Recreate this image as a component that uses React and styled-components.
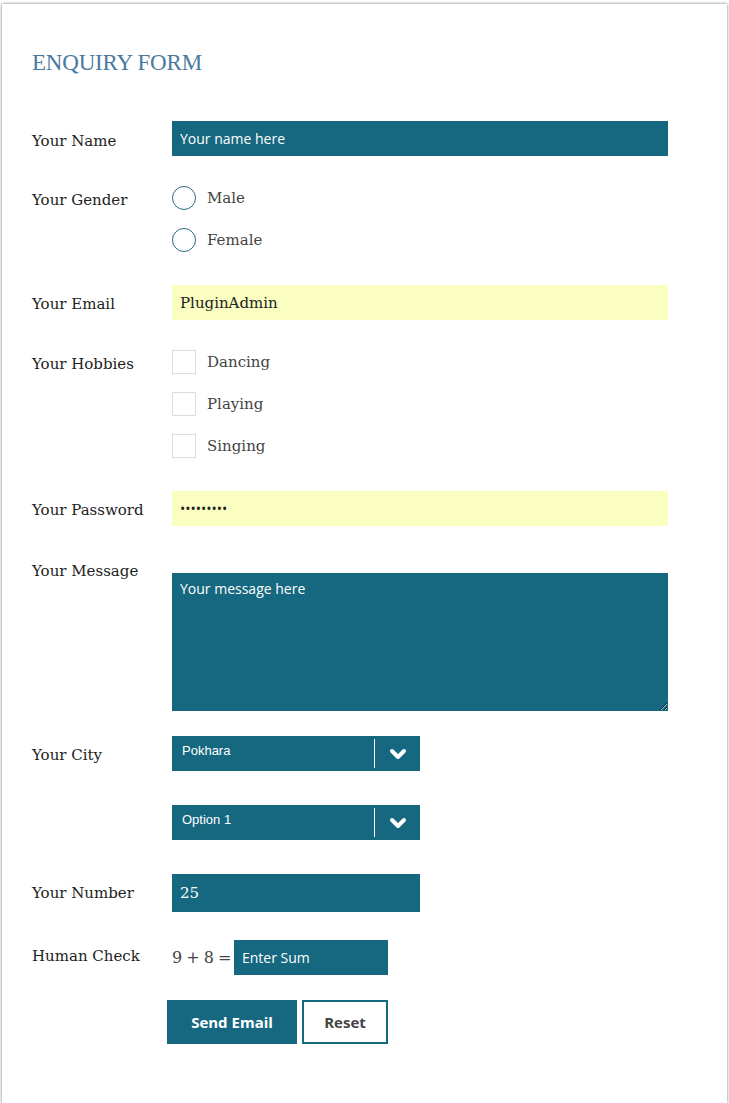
import React from 'react';
import styled, { createGlobalStyle } from 'styled-components';

const teal = '#15687f';

const GlobalStyle = createGlobalStyle`
  html, body {
    margin: 0;
    padding: 0;
    background: #fff;
  }
  * {
    box-sizing: border-box;
  }
`;

const Frame = styled.div`
  margin: 4px 2px 0 2px;
  min-height: 1099px;
  background: #fff;
  box-shadow: 0 0 3px rgba(0, 0, 0, 0.55);
  padding: 46px 30px 40px 30px;
`;

const Title = styled.h2`
  margin: 0 0 45px 0;
  font-family: 'Liberation Serif', serif;
  font-weight: normal;
  font-size: 23px;
  letter-spacing: -0.2px;
  color: #4a79a0;
`;

const Row = styled.div`
  display: flex;
  align-items: flex-start;
  margin-top: ${(p) => p.$top || 0}px;
`;

const Label = styled.label`
  width: 140px;
  flex-shrink: 0;
  padding-top: ${(p) => p.$pad || 0}px;
  font-family: 'DejaVu Serif', serif;
  font-size: 15px;
  line-height: 20px;
  color: #222;
`;

const Field = styled.div`
  display: flex;
  flex-direction: column;
  gap: ${(p) => p.$gap || 0}px;
`;

const TextInput = styled.input`
  width: ${(p) => p.$w || 496}px;
  height: ${(p) => p.$h || 35}px;
  border: none;
  outline: none;
  padding: 0 8px;
  background: ${(p) => (p.$filled ? '#fafec0' : teal)};
  color: ${(p) => (p.$filled ? '#222' : '#fff')};
  font-family: ${(p) => (p.$serif ? "'DejaVu Serif', serif" : "'Open Sans', sans-serif")};
  font-size: ${(p) => (p.$serif ? 15 : 14)}px;
  &::placeholder {
    color: #fff;
    opacity: 1;
  }
`;

const TextArea = styled.textarea`
  display: block;
  margin-top: 12px;
  width: 496px;
  height: 138px;
  border: none;
  outline: none;
  padding: 6px 8px;
  resize: vertical;
  background: ${teal};
  color: #fff;
  font-family: 'Open Sans', sans-serif;
  font-size: 14px;
  &::placeholder {
    color: #fff;
    opacity: 1;
  }
`;

const Choice = styled.label`
  display: flex;
  align-items: center;
  gap: 11px;
  height: 24px;
  font-family: 'DejaVu Serif', serif;
  font-size: 15px;
  color: #444;
`;

const Radio = styled.span`
  width: 24px;
  height: 24px;
  border-radius: 50%;
  border: 1px solid #2c6a84;
  flex-shrink: 0;
`;

const Check = styled.span`
  width: 24px;
  height: 24px;
  border: 1px solid #dcdcdc;
  flex-shrink: 0;
`;

const Select = styled.div`
  display: flex;
  align-items: center;
  width: 248px;
  height: 35px;
  background: ${teal};
  color: #fff;
  font-family: 'Liberation Sans', Arial, sans-serif;
  font-size: 13px;
`;

const SelectText = styled.span`
  flex: 1;
  padding: 0 10px;
  margin-top: -6px;
`;

const Divider = styled.span`
  width: 1px;
  height: 29px;
  background: #fff;
`;

const Arrow = styled.span`
  width: 45px;
  display: flex;
  justify-content: center;
  align-items: center;
`;

const SelectStack = styled.div`
  display: flex;
  flex-direction: column;
  gap: 34px;
`;

const Sum = styled.div`
  display: flex;
  align-items: center;
  gap: 3px;
  font-family: 'DejaVu Serif', serif;
  font-size: 16px;
  letter-spacing: -0.5px;
  color: #444;
`;

const Buttons = styled.div`
  display: flex;
  gap: 5px;
  margin-top: 25px;
  margin-left: 135px;
`;

const Button = styled.button`
  height: 44px;
  width: ${(p) => p.$w}px;
  border: 2px solid ${teal};
  background: ${(p) => (p.$primary ? teal : '#fff')};
  color: ${(p) => (p.$primary ? '#fff' : '#444')};
  font-family: 'Open Sans', sans-serif;
  font-weight: 700;
  font-size: 15px;
  cursor: pointer;
`;

const Chevron = () => (
  <svg width="18" height="12" viewBox="0 0 18 12">
    <polyline
      points="3,3 9,9 15,3"
      fill="none"
      stroke="#fff"
      strokeWidth="4"
      strokeLinecap="round"
      strokeLinejoin="round"
    />
  </svg>
);

const Dropdown = ({ value }) => (
  <Select>
    <SelectText>{value}</SelectText>
    <Divider />
    <Arrow>
      <Chevron />
    </Arrow>
  </Select>
);

export default function App() {
  return (
    <>
      <GlobalStyle />
      <Frame>
        <Title>ENQUIRY FORM</Title>

        <Row>
          <Label $pad={10}>Your Name</Label>
          <TextInput placeholder="Your name here" />
        </Row>

        <Row $top={30}>
          <Label $pad={4}>Your Gender</Label>
          <Field $gap={18}>
            <Choice><Radio />Male</Choice>
            <Choice><Radio />Female</Choice>
          </Field>
        </Row>

        <Row $top={33}>
          <Label $pad={9}>Your Email</Label>
          <TextInput $filled $serif defaultValue="PluginAdmin" />
        </Row>

        <Row $top={30}>
          <Label $pad={4}>Your Hobbies</Label>
          <Field $gap={18}>
            <Choice><Check />Dancing</Choice>
            <Choice><Check />Playing</Choice>
            <Choice><Check />Singing</Choice>
          </Field>
        </Row>

        <Row $top={33}>
          <Label $pad={9}>Your Password</Label>
          <TextInput $filled type="password" defaultValue="123456789" />
        </Row>

        <Row $top={35}>
          <Label>Your Message</Label>
          <TextArea placeholder="Your message here" />
        </Row>

        <Row $top={25}>
          <Label $pad={9}>Your City</Label>
          <SelectStack>
            <Dropdown value="Pokhara" />
            <Dropdown value="Option 1" />
          </SelectStack>
        </Row>

        <Row $top={34}>
          <Label $pad={9}>Your Number</Label>
          <TextInput $w={248} $h={38} $serif defaultValue="25" />
        </Row>

        <Row $top={28}>
          <Label $pad={6}>Human Check</Label>
          <Sum>
            9 + 8 =
            <TextInput $w={154} $h={35} placeholder="Enter Sum" />
          </Sum>
        </Row>

        <Buttons>
          <Button $primary $w={130}>Send Email</Button>
          <Button $w={86}>Reset</Button>
        </Buttons>
      </Frame>
    </>
  );
}
